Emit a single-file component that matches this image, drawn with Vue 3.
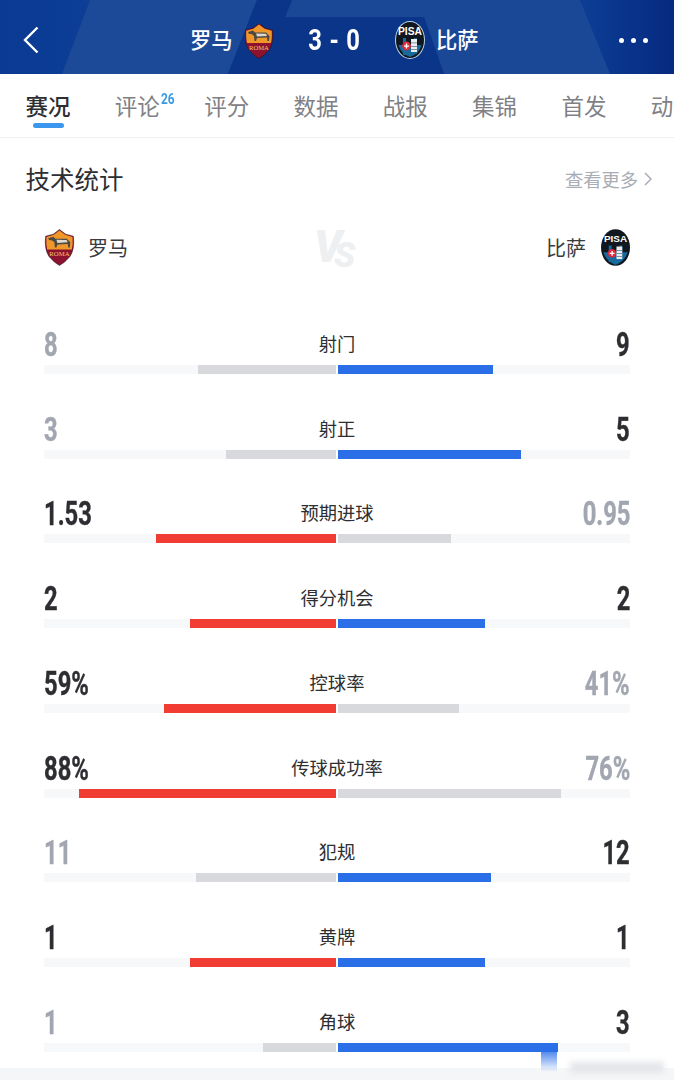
<script setup>
const tabs = ['赛况', '评论', '评分', '数据', '战报', '集锦', '首发', '动']
const rows = [
  { name: '射门', l: '8', r: '9', lw: 138, rw: 155, lc: 'grey', rc: 'blue', lf: 'dim', rf: '' },
  { name: '射正', l: '3', r: '5', lw: 110, rw: 183, lc: 'grey', rc: 'blue', lf: 'dim', rf: '' },
  { name: '预期进球', l: '1.53', r: '0.95', lw: 180, rw: 113, lc: 'red', rc: 'grey', lf: '', rf: 'dim' },
  { name: '得分机会', l: '2', r: '2', lw: 146, rw: 147, lc: 'red', rc: 'blue', lf: '', rf: '' },
  { name: '控球率', l: '59%', r: '41%', lw: 172, rw: 121, lc: 'red', rc: 'grey', lf: '', rf: 'dim' },
  { name: '传球成功率', l: '88%', r: '76%', lw: 257, rw: 223, lc: 'red', rc: 'grey', lf: '', rf: 'dim' },
  { name: '犯规', l: '11', r: '12', lw: 140, rw: 153, lc: 'grey', rc: 'blue', lf: 'dim', rf: '' },
  { name: '黄牌', l: '1', r: '1', lw: 146, rw: 147, lc: 'red', rc: 'blue', lf: '', rf: '' },
  { name: '角球', l: '1', r: '3', lw: 73, rw: 220, lc: 'grey', rc: 'blue', lf: 'dim', rf: '' },
]
</script>

<template>
  <div class="page">
    <header class="top">
      <svg class="top-bg" viewBox="0 0 674 74" preserveAspectRatio="none" aria-hidden="true">
        <polygon points="90,0 257,0 228,74 62,74" fill="#1c4a98" />
        <polygon points="292,0 580,0 610,74 444,74 424,17 285,17" fill="#1b4896" />
        <polygon points="257,0 292,0 285,17 424,17 444,74 228,74" fill="#0a3588" />
      </svg>
      <svg class="back" width="16" height="28" viewBox="0 0 16 28" aria-hidden="true">
        <path d="M14.5 1.5 L2 14 L14.5 26.5" fill="none" stroke="#fff" stroke-width="2.4" />
      </svg>
      <div class="match">
        <span class="t-name">罗马</span>
        <svg class="crest-top" width="30" height="36" viewBox="0 0 30 36" aria-hidden="true">
          <path d="M15 0.5 L21 5 L28.5 7 Q30 20 25 27 Q20 33 15 35.5 Q10 33 5 27 Q0 20 1.5 7 L9 5 Z" fill="#8d1230" stroke="#1a1a1a" stroke-width=".5" />
          <path d="M15 1.5 L20.5 5.7 L27.7 7.7 Q28.2 15 27 20 L3 20 Q1.8 15 2.3 7.7 L9.5 5.7 Z" fill="#f0972a" />
          <path d="M4 9 L9 7.5 L11 9.5 L22 9.5 L25.5 13 L25 18 L23.5 18 L23 14.5 L13 15 L12 18 L10.5 18 L10 13 L7.5 11 L5 11 Z" fill="#4c4844" />
          <path d="M12 10.5 L22 10.8 L23 13 L13 13.5 Z" fill="#ddd8ce" />
          <text x="15" y="26.5" class="roma-text" font-size="6.6">ROMA</text>
        </svg>
        <span class="score">3 - 0</span>
        <svg class="crest-top-r" width="30" height="38" viewBox="0 0 30 38" aria-hidden="true">
          <ellipse cx="15" cy="19" rx="15" ry="19" fill="#bcd0e0" />
          <ellipse cx="15" cy="19" rx="14" ry="18" fill="#10171e" />
          <path d="M3.5 24 Q6 33 15 36 Q24 33 26.5 24 Z" fill="#176a9c" />
          <path d="M8 17 H11 V34 H8 Z M19 17 H22 V33 H19 Z" fill="#176a9c" />
          <text x="15" y="13.5" class="pisa-text" font-size="10" textLength="24" lengthAdjust="spacingAndGlyphs">PISA</text>
          <circle cx="11.5" cy="25" r="4.4" fill="#e0283a" />
          <path d="M9 24.4 H14 V25.8 H9 Z M10.8 22.5 H12.2 V27.5 H10.8 Z" fill="#fff" />
          <path d="M16 18 H22 V31 H16 Z" fill="#e9edf0" />
          <path d="M16 21.5 H22 V22.3 H16 Z M16 25 H22 V25.8 H16 Z M16 28 H22 V28.8 H16 Z" fill="#5d7890" />
        </svg>
        <span class="t-name">比萨</span>
      </div>
      <div class="dots"><i></i><i></i><i></i></div>
    </header>

    <nav class="tabs">
      <div v-for="(t, i) in tabs" :key="t" class="tab" :class="{ on: i === 0 }">
        {{ t }}
        <sup v-if="i === 1" class="badge">26</sup>
      </div>
    </nav>

    <section class="head">
      <h2>技术统计</h2>
      <div class="more">
        查看更多
        <svg width="8" height="14" viewBox="0 0 8 14" aria-hidden="true">
          <path d="M1 1 L7 7 L1 13" fill="none" stroke="#a9adb5" stroke-width="1.5" />
        </svg>
      </div>
    </section>

    <section class="teams">
      <div class="team">
        <svg width="31" height="37" viewBox="0 0 30 36" aria-hidden="true">
          <path d="M15 0.5 L21 5 L28.5 7 Q30 20 25 27 Q20 33 15 35.5 Q10 33 5 27 Q0 20 1.5 7 L9 5 Z" fill="#8d1230" stroke="#1a1a1a" stroke-width=".5" />
          <path d="M15 1.5 L20.5 5.7 L27.7 7.7 Q28.2 15 27 20 L3 20 Q1.8 15 2.3 7.7 L9.5 5.7 Z" fill="#f0972a" />
          <path d="M4 9 L9 7.5 L11 9.5 L22 9.5 L25.5 13 L25 18 L23.5 18 L23 14.5 L13 15 L12 18 L10.5 18 L10 13 L7.5 11 L5 11 Z" fill="#4c4844" />
          <path d="M12 10.5 L22 10.8 L23 13 L13 13.5 Z" fill="#ddd8ce" />
          <text x="15" y="26.5" class="roma-text" font-size="6.6">ROMA</text>
        </svg>
        <span class="gap-l">罗马</span>
      </div>
      <div class="vs"><span class="v">V</span><span class="s">S</span></div>
      <div class="team">
        <span class="gap-r">比萨</span>
        <svg width="29" height="37" viewBox="0 0 30 38" aria-hidden="true">
          <ellipse cx="15" cy="19" rx="15" ry="19" fill="#10171e" />
          <path d="M2.5 24 Q5 33 15 37 Q25 33 27.5 24 Z" fill="#176a9c" />
          <path d="M8 17 H11 V34 H8 Z M19 17 H22 V33 H19 Z" fill="#176a9c" />
          <text x="15" y="13.5" class="pisa-text" font-size="10" textLength="24" lengthAdjust="spacingAndGlyphs">PISA</text>
          <circle cx="11.5" cy="25" r="4.4" fill="#e0283a" />
          <path d="M9 24.4 H14 V25.8 H9 Z M10.8 22.5 H12.2 V27.5 H10.8 Z" fill="#fff" />
          <path d="M16 18 H22 V31 H16 Z" fill="#e9edf0" />
          <path d="M16 21.5 H22 V22.3 H16 Z M16 25 H22 V25.8 H16 Z M16 28 H22 V28.8 H16 Z" fill="#5d7890" />
        </svg>
      </div>
    </section>

    <section class="stats">
      <div v-for="row in rows" :key="row.name" class="stat">
        <div class="line">
          <span class="num left" :class="row.lf">{{ row.l }}</span>
          <span class="label">{{ row.name }}</span>
          <span class="num right" :class="row.rf">{{ row.r }}</span>
        </div>
        <div class="bars">
          <div class="track end">
            <div class="fill" :class="row.lc" :style="{ width: row.lw + 'px' }"></div>
          </div>
          <div class="track">
            <div class="fill" :class="row.rc" :style="{ width: row.rw + 'px' }"></div>
          </div>
        </div>
      </div>
    </section>
    <div class="foot"></div>
    <div class="smear"></div>
    <div class="mark"></div>
  </div>
</template>

<style>
html, body { margin: 0; background: #fff; }
</style>

<style scoped>
.page {
  width: 674px;
  height: 1080px;
  overflow: hidden;
  position: relative;
  display: flex;
  flex-direction: column;
  background: #fff;
  font-family: "Noto Sans CJK SC", "Noto Sans", sans-serif;
  color: #2d2e31;
}
.top {
  position: relative;
  flex: none;
  height: 74px;
  display: flex;
  align-items: center;
  justify-content: space-between;
  padding: 6px 26px 0 24px;
  box-sizing: border-box;
  background: linear-gradient(90deg, #0a3a93 0%, #0d3f97 15%, #0d3f97 85%, #062a80 100%);
  color: #fff;
}
.top-bg { position: absolute; inset: 0; width: 100%; height: 100%; }
.back { position: relative; margin-left: -1px; }
.match {
  display: flex;
  align-items: center;
  position: absolute;
  left: 190px;
  top: 20px;
  height: 40px;
}
.t-name { font-size: 21.3px; font-weight: 500; line-height: 40px; width: 42px; white-space: nowrap; margin-top: -2px; }
.crest-top { margin-left: 12px; flex: none; margin-top: 1px; }
.crest-top-r { margin-right: 11px; flex: none; }
.score {
  width: 121px;
  text-align: center;
  font-family: Roboto, sans-serif;
  font-weight: 700;
  font-size: 29px;
  letter-spacing: 1px;
  transform: scaleX(.82);
}
.roma-text { font-family: "Liberation Serif", serif; fill: #f3c66a; text-anchor: middle; }
.pisa-text { font-family: "Liberation Sans", sans-serif; font-weight: 700; fill: #fff; text-anchor: middle; }
.dots { position: relative; display: flex; gap: 7px; }
.dots i { width: 5px; height: 5px; border-radius: 50%; background: #fff; display: block; }

.tabs {
  flex: none;
  height: 64px;
  box-sizing: border-box;
  border-bottom: 1px solid #eeeff1;
  display: flex;
  gap: 44.3px;
  padding-left: 25.5px;
  overflow: hidden;
}
.tab {
  position: relative;
  flex: none;
  font-size: 22.5px;
  line-height: 62px;
  height: 63px;
  color: #7f8186;
  white-space: nowrap;
}
.tab.on { color: #2d2e31; font-weight: 500; }
.tab.on::after {
  content: "";
  position: absolute;
  left: 7px;
  bottom: 9px;
  width: 31px;
  height: 5px;
  border-radius: 3px;
  background: #3b97ee;
}
.badge {
  position: absolute;
  left: 46px;
  top: 17px;
  font-family: Roboto, sans-serif;
  font-weight: 700;
  font-size: 14px;
  line-height: 16px;
  color: #3a9be4;
  transform: scaleX(.85);
  transform-origin: left center;
}
.head {
  flex: none;
  height: 80px;
  padding: 0 22px 0 25.5px;
  display: flex;
  justify-content: space-between;
  align-items: center;
  box-sizing: border-box;
}
.head h2 { margin: 0; font-size: 24.5px; font-weight: 400; color: #2d2e31; letter-spacing: 0; }
.more {
  display: flex;
  align-items: center;
  gap: 6px;
  font-size: 18.3px;
  color: #a9adb5;
  padding-top: 1px;
}
.teams {
  flex: none;
  height: 36px;
  margin-top: 11px;
  padding: 0 44px;
  display: flex;
  justify-content: space-between;
  align-items: center;
  position: relative;
}
.team { display: flex; align-items: center; font-size: 20px; color: #3a3b3e; }
.gap-l { margin-left: 13px; }
.gap-r { margin-right: 15px; }
.vs {
  display: flex;
  width: 42px;
  height: 36px;
  margin-left: -4px;
  font-family: Roboto, sans-serif;
  font-weight: 900;
  font-style: italic;
  color: #eeeff0;
  overflow: visible;
}
.v { width: 20px; font-size: 44px; line-height: 36px; }
.s { width: 22px; font-size: 35px; line-height: 28px; padding-top: 13px; }
.stats { flex: none; margin-top: 63px; }
.stat { height: 84.72px; padding: 0 44px; box-sizing: border-box; }
.line {
  height: 34px;
  display: grid;
  grid-template-columns: 1fr auto 1fr;
  align-items: center;
}
.num {
  font-family: Roboto, sans-serif;
  font-weight: 700;
  font-size: 33px;
  line-height: 34px;
  color: #2d2e31;
  transform: scaleX(.72);
  white-space: nowrap;
  -webkit-text-stroke: .4px currentColor;
}
.num.left { transform-origin: left center; }
.num.right { transform-origin: right center; text-align: right; }
.num.dim { color: #a2a6b0; }
.label { font-size: 18.3px; line-height: 30px; margin-bottom: 4px; color: #2d2e31; }
.bars { display: flex; gap: 2px; margin-top: 3px; }
.track { flex: 1; height: 9px; background: #f7f8f9; display: flex; }
.track.end { justify-content: flex-end; }
.fill { height: 100%; }
.fill.red { background: #f03c32; }
.fill.blue { background: #2a6fe8; }
.fill.grey { background: #d7d9dd; }
.foot {
  position: absolute;
  left: 0;
  right: 0;
  top: 1068px;
  height: 12px;
  background: #f5f6f8;
}
.smear {
  position: absolute;
  left: 541px;
  top: 1052px;
  width: 16px;
  height: 20px;
  background: linear-gradient(180deg, rgba(42, 111, 232, .8), rgba(42, 111, 232, 0));
}
.mark {
  position: absolute;
  left: 570px;
  top: 1062px;
  width: 94px;
  height: 11px;
  background: #e3e5e9;
  filter: blur(3px);
}
</style>
